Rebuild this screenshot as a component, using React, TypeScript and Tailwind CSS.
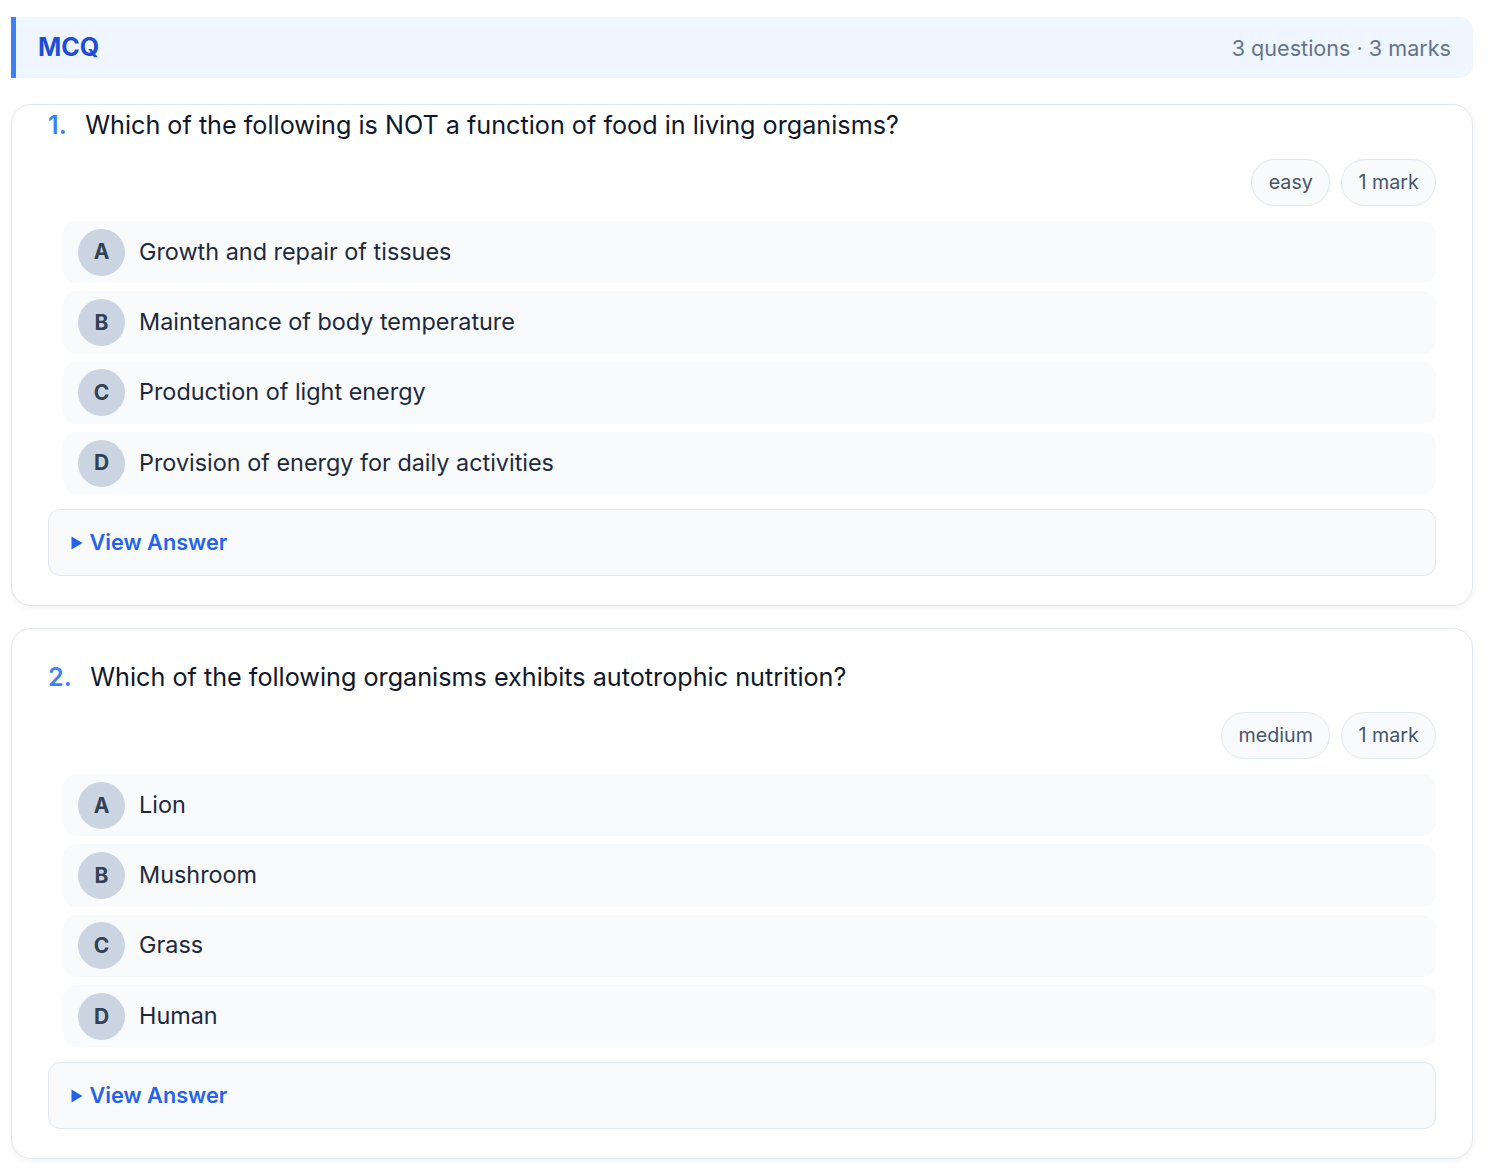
import React from 'react';

type Question = {
  num: number;
  text: string;
  level: string;
  options: string[];
};

const questions: Question[] = [
  {
    num: 1,
    text: 'Which of the following is NOT a function of food in living organisms?',
    level: 'easy',
    options: [
      'Growth and repair of tissues',
      'Maintenance of body temperature',
      'Production of light energy',
      'Provision of energy for daily activities',
    ],
  },
  {
    num: 2,
    text: 'Which of the following organisms exhibits autotrophic nutrition?',
    level: 'medium',
    options: ['Lion', 'Mushroom', 'Grass', 'Human'],
  },
];

const LETTERS = ['A', 'B', 'C', 'D'];

const QuestionCard: React.FC<{ q: Question; first: boolean }> = ({ q, first }) => (
  <div
    className={`rounded-[20px] border border-[#e2e8f0] bg-white pl-9 pr-9 pb-[29px] shadow-[0_2px_6px_rgba(15,23,42,0.05)] ${
      first ? 'pt-0' : 'pt-[28px]'
    }`}
  >
    {/* Question */}
    <div className="flex h-[41px] items-center gap-[18.5px] text-[25.2px] leading-[41px] text-[#0f172a]">
      <span className="font-semibold text-[#3b82f6]">{q.num}.</span>
      <span>{q.text}</span>
    </div>

    {/* Pills */}
    <div className={`flex justify-end gap-[11px] ${first ? 'mt-[13px]' : 'mt-[13.5px]'}`}>
      {[q.level, '1 mark'].map((label) => (
        <span
          key={label}
          className="flex h-[47px] items-center rounded-full border border-[#e2e8f0] bg-[#f8fafc] px-[16.25px] text-[19.7px] text-[#475569]"
        >
          {label}
        </span>
      ))}
    </div>

    {/* Options */}
    <div className={`ml-[15px] flex flex-col gap-2 ${first ? 'mt-[15px]' : 'mt-[15.3px]'}`}>
      {q.options.map((opt, i) => (
        <div key={opt} className="flex h-[62.33px] items-center gap-[14px] rounded-[14px] bg-[#f8fafc] pl-[15px]">
          <span className="flex h-[47px] w-[47px] items-center justify-center rounded-full bg-[#cbd5e1] text-[21px] font-bold text-[#334155]">
            {LETTERS[i]}
          </span>
          <span className="pb-[2px] text-[23.4px] text-[#1e293b]">{opt}</span>
        </div>
      ))}
    </div>

    {/* Answer */}
    <div className="mt-[15px] flex h-[67px] items-center gap-[6.5px] rounded-[12px] border border-[#e2e8f0] bg-[#f8fafc] pl-[22px] text-[21.7px] font-semibold text-[#2563eb]">
      <svg width="12" height="14" viewBox="0 0 12 14" className="shrink-0">
        <path d="M0.5 0.5 L11.5 7 L0.5 13.5 Z" fill="#2563eb" />
      </svg>
      <span className="pb-[2px]">View Answer</span>
    </div>
  </div>
);

export default function App() {
  return (
    <div className="min-h-[1172px] bg-white pt-[17px] pl-[11px] pr-[27px] font-['Inter',sans-serif]">
      {/* Section header */}
      <div className="flex h-[61px] items-center justify-between rounded-r-[14px] border-l-[5px] border-[#3b82f6] bg-[#eff6ff] pl-[22px] pr-[22px]">
        <span className="text-[25px] font-bold text-[#1d4ed8]">MCQ</span>
        <span className="mt-[2px] text-[21.6px] text-[#64748b]">3 questions · 3 marks</span>
      </div>

      <div className="mt-[26px] flex flex-col gap-[22px]">
        {questions.map((q, i) => (
          <QuestionCard key={q.num} q={q} first={i === 0} />
        ))}
      </div>
    </div>
  );
}
